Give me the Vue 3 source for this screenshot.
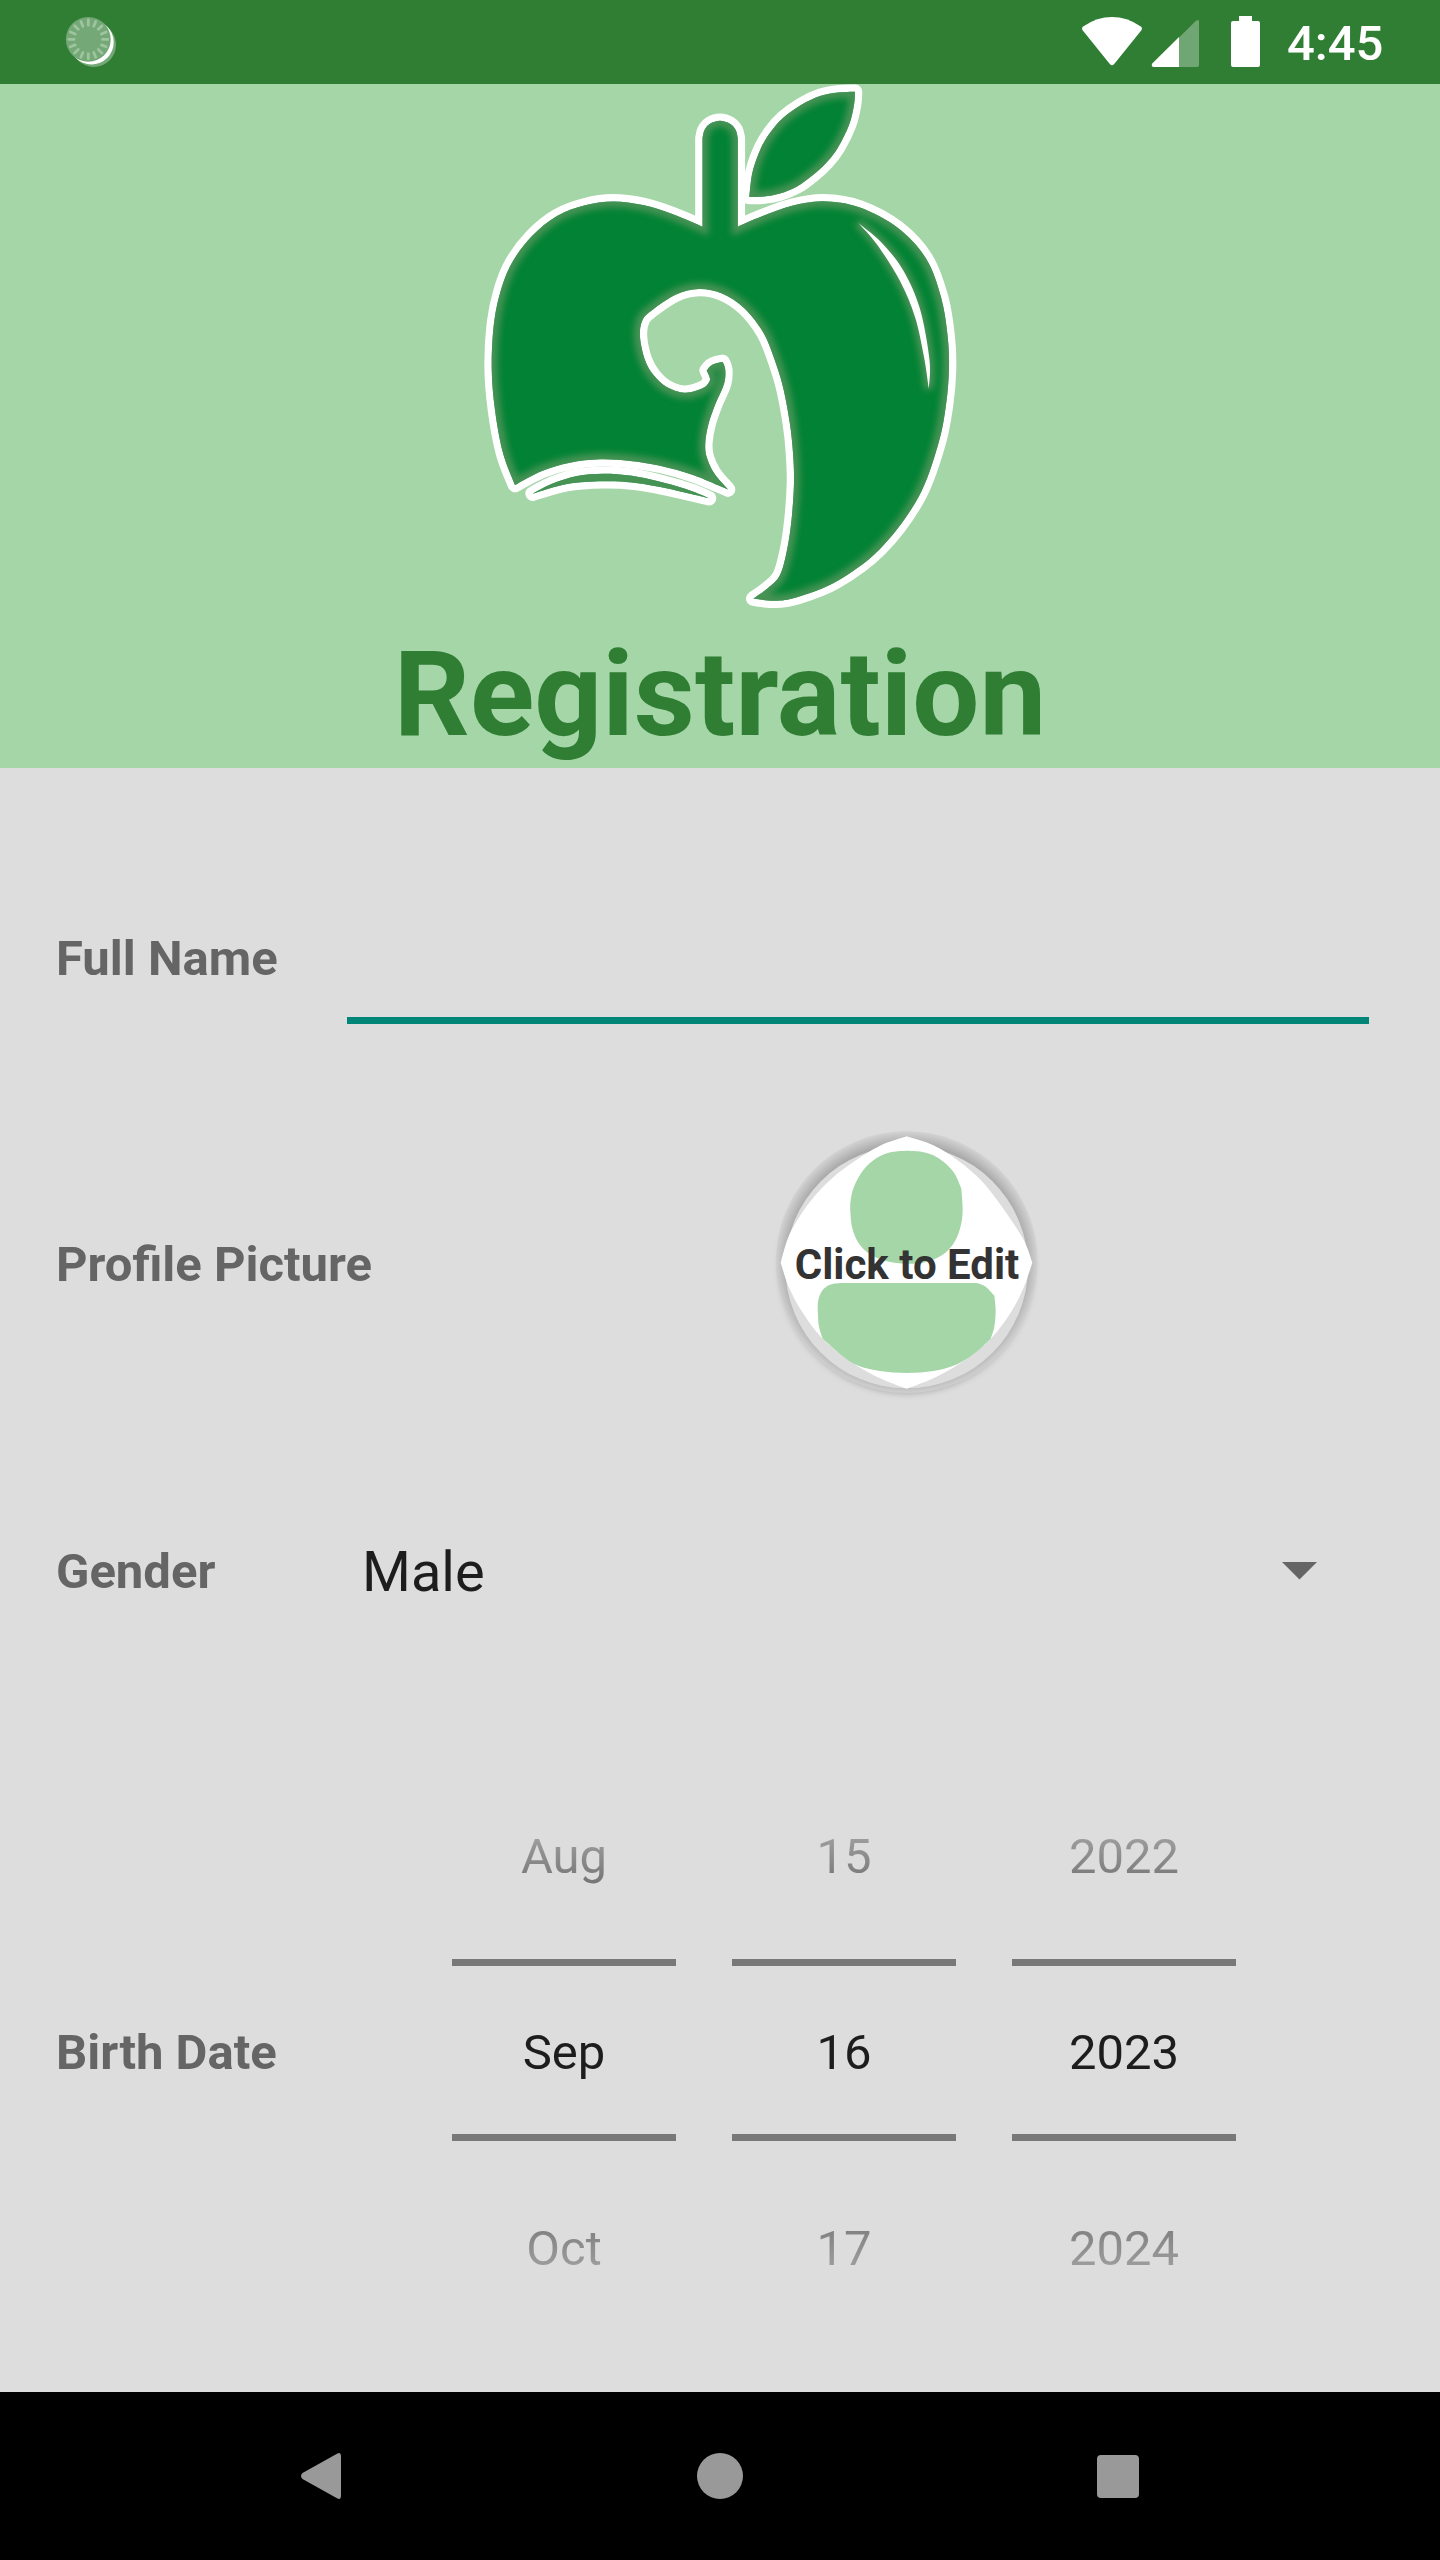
<script setup>
// Turns a run of points into a smooth cubic curve (Catmull-Rom).
function curve(pts) {
  let d = ''
  for (let i = 0; i < pts.length - 1; i++) {
    const p0 = pts[i - 1] || pts[i]
    const p1 = pts[i]
    const p2 = pts[i + 1]
    const p3 = pts[i + 2] || p2
    const c = [
      p1[0] + (p2[0] - p0[0]) / 6, p1[1] + (p2[1] - p0[1]) / 6,
      p2[0] - (p3[0] - p1[0]) / 6, p2[1] - (p3[1] - p1[1]) / 6,
      p2[0], p2[1],
    ]
    d += 'C' + c.map((n) => n.toFixed(2)).join(' ')
  }
  return d
}

// Each run starts where the previous one ended, with a sharp corner between them.
function shape(...runs) {
  return 'M' + runs[0][0].join(' ') + runs.map(curve).join('') + 'Z'
}

const apple = shape(
  [[702.5, 226.7], [702.5, 138]],
  [[702.5, 138], [704.5, 130], [710, 123.7], [720, 120.8], [730, 123.7], [735.7, 130], [737.8, 138]],
  [[737.8, 138], [737.8, 226.7]],
  [[737.8, 226.7], [762, 216.3], [792, 205.8], [823.3, 201.3], [860, 207.5], [898, 228], [926, 258.5], [941, 297], [947.5, 335], [949, 368], [946, 405], [938, 445], [918, 498], [880, 549], [836, 581.8], [797, 597.3], [775, 600.8], [753.3, 598.6]],
  [[753.3, 598.6], [768, 588], [780, 575], [787, 550], [791.5, 520], [794, 483], [793, 453], [789.8, 423], [783, 387], [774, 358], [763, 332], [744, 308], [722, 293.5], [699, 289], [676, 294.5], [653, 309.5], [642.5, 320], [640, 337], [645, 360], [653.5, 375], [666.7, 387], [685, 392.7], [703, 388], [709.3, 381.7], [709.7, 377.5], [706.7, 370.5]],
  [[706.7, 370.5], [710.5, 366], [715.5, 363.5], [722.7, 362]],
  [[722.7, 362], [725.3, 370], [724, 384], [715, 405], [708.5, 424], [705.3, 443], [706.7, 457], [714, 473], [728, 489.5]],
  [[728, 489.5], [693, 475], [660, 465.7], [630, 460.9], [600, 459.3], [570, 462.7], [542, 471], [515, 485]],
  [[515, 485], [503, 453], [495, 410], [491.7, 368], [494, 323], [501.5, 288], [513, 261], [532, 236], [557, 216], [585, 205.3], [613, 201.4], [643, 205], [673, 214.3], [702.5, 226.7]],
)
const leaf = shape(
  [[855, 91.7], [838, 92.5], [820, 96], [801, 105], [783, 118], [771, 131.5], [761, 148], [752.5, 172], [749.3, 197]],
  [[749.3, 197], [764, 196.6], [780, 193.5], [797, 186.5], [813, 175], [827, 162], [838, 147.5], [849, 125], [854, 105], [855, 91.7]],
)
const page = shape(
  [[532.7, 493.7], [552, 483.8], [577, 476], [603, 473.7], [632, 475.8], [665, 483], [690, 490.5], [709, 498.2]],
  [[709, 498.2], [665, 488], [632, 482.5], [603, 481.2], [567, 484], [532.7, 493.7]],
)
const shine = shape(
  [[858, 222.7], [881, 242], [903, 270], [920, 309], [929.5, 360], [928.8, 389]],
  [[928.8, 389], [924, 357], [915, 317], [900, 281], [877, 244.5], [858, 222.7]],
)

const badge = shape(
  [[500, 109], [580, 136], [655, 182], [725, 243], [790, 326], [850, 418], [877, 488]],
  [[877, 488], [852, 560], [815, 633], [757, 711], [680, 777], [590, 830], [500, 866]],
  [[500, 866], [410, 830], [320, 777], [243, 711], [185, 633], [146, 560], [122, 488]],
  [[122, 488], [150, 400], [210, 305], [275, 236], [340, 186], [420, 137], [500, 109]],
)
const head = shape(
  [[500, 152], [455, 156], [410, 174], [370, 210], [342, 260], [332, 300], [331, 335], [337, 385], [356, 430], [390, 463], [440, 484], [500, 491], [562, 485], [610, 463], [644, 425], [662, 378], [668, 330], [664, 266]],
  [[664, 266], [643, 220], [612, 187], [580, 166], [545, 155], [500, 152]],
)
const torso = shape(
  [[300, 549], [710, 549]],
  [[710, 549], [737, 560], [763, 587]],
  [[763, 587], [767, 630], [763, 680], [752, 716]],
  [[752, 716], [716, 750], [680, 777], [640, 797], [580, 813], [500, 819], [420, 813], [355, 797], [310, 770], [248, 716]],
  [[248, 716], [237, 680], [234, 645], [234, 605], [246, 573], [268, 555], [300, 549]],
)

const ticks = Array.from({ length: 16 }, (_, i) => i * 22.5)
const columns = [
  ['Aug', 'Sep', 'Oct'],
  ['15', '16', '17'],
  ['2022', '2023', '2024'],
]
</script>

<template>
  <div class="screen">
    <div class="status">
      <svg class="sync" width="56" height="56" viewBox="64 14 56 56">
        <circle cx="93.8" cy="44.8" r="22.2" fill="#75a877" />
        <circle cx="91.5" cy="42.3" r="22.2" fill="#fff" />
        <circle cx="88.3" cy="39.4" r="22.4" fill="#75a877" />
        <path
          v-for="a in ticks" :key="a" d="M88.3 20V25.2" :transform="`rotate(${a} 88.3 39.4)`"
          stroke="#9fc4a0" stroke-width="2.8" stroke-linecap="round"
        />
      </svg>
      <div class="status-right">
        <svg width="180" height="56" viewBox="1082 14 180 56" fill="#fff">
          <path d="M1082.8 30.5Q1081 28 1083.6 26.2Q1097 17 1112 17T1140.4 26.2Q1143 28 1141.2 30.5L1114 64.2Q1112 66.4 1110 64.2Z" />
          <path d="M1196 20.8Q1199 18.5 1199 22V65Q1199 67 1197 67H1179V37.5Z" fill="#70a673" />
          <path d="M1179 37V67H1154Q1151 67 1152 63.8Z" />
          <path d="M1239 16H1252V21H1258Q1260 21 1260 23V65Q1260 67 1258 67H1233Q1231 67 1231 65V23Q1231 21 1233 21H1239Z" />
        </svg>
        <span class="clock">4:45</span>
      </div>
    </div>

    <div class="header">
      <svg class="logo" width="480" height="541" viewBox="480 84 480 541">
        <defs>
          <filter id="soft" x="-10%" y="-10%" width="120%" height="120%"><feGaussianBlur stdDeviation="3.4" /></filter>
          <clipPath id="inside"><path :d="apple" /><path :d="leaf" /><path :d="page" /></clipPath>
        </defs>
        <g fill="#fff" stroke="#fff" stroke-width="14.6" stroke-linejoin="round">
          <path :d="page" /><path :d="leaf" /><path :d="apple" />
        </g>
        <g fill="#028234"><path :d="apple" /><path :d="leaf" /><path :d="page" /></g>
        <g clip-path="url(#inside)">
          <g fill="none" stroke="#5d985f" stroke-opacity=".75" stroke-width="12" filter="url(#soft)">
            <path :d="apple" /><path :d="leaf" /><path :d="page" /><path :d="shine" stroke-width="9" />
          </g>
        </g>
        <path :d="shine" fill="#fff" />
      </svg>
      <h1>Registration</h1>
    </div>

    <div class="form">
      <div class="row">
        <label>Full Name</label>
        <div class="input"></div>
      </div>
      <div class="row photo">
        <label>Profile Picture</label>
        <div class="avatar">
          <svg width="330" height="320" viewBox="0 0 990 960">
            <defs>
              <radialGradient id="rim" gradientUnits="userSpaceOnUse" cx="500" cy="488" r="394">
                <stop offset=".9" stop-color="#a9a9a9" />
                <stop offset="1" stop-color="#d3d3d3" />
              </radialGradient>
              <filter id="drop" x="-20%" y="-20%" width="140%" height="140%"><feGaussianBlur stdDeviation="10" /></filter>
            </defs>
            <circle cx="500" cy="500" r="381" fill="#000" fill-opacity=".22" filter="url(#drop)" />
            <circle cx="500" cy="486" r="393" fill="url(#rim)" />
            <circle cx="500" cy="501" r="364" fill="#ddd" />
            <path :d="badge" fill="#fff" />
            <path :d="head" fill="#a5d6a7" />
            <path :d="torso" fill="#a5d6a7" />
          </svg>
          <span>Click to Edit</span>
        </div>
      </div>
      <div class="row">
        <label>Gender</label>
        <div class="select">
          <span>Male</span>
          <svg width="35" height="18" viewBox="0 0 35 18"><path d="M0 0H35L17.5 17.5Z" fill="#656565" /></svg>
        </div>
      </div>
      <div class="row date">
        <label>Birth Date</label>
        <div class="picker">
          <div v-for="c in columns" :key="c[1]" class="col">
            <div class="item before">{{ c[0] }}</div>
            <div class="item current">{{ c[1] }}</div>
            <div class="item after">{{ c[2] }}</div>
          </div>
        </div>
      </div>
    </div>

    <div class="nav">
      <svg width="40" height="46" viewBox="0 0 40 46"><path d="M36 .8Q40-1.5 40 4V42Q40 47.500 36 45.200L1.500 26Q-1.500 23 1.500 20Z" fill="#999" /></svg>
      <svg class="home" width="46" height="46" viewBox="0 0 46 46"><circle cx="23" cy="23" r="23" fill="#999" /></svg>
      <svg width="42" height="43" viewBox="0 0 42 43"><rect width="42" height="43" rx="4" fill="#999" /></svg>
    </div>
  </div>
</template>

<style>
body { margin: 0; }
</style>

<style scoped>
.screen {
  width: 1440px;
  height: 2560px;
  display: flex;
  flex-direction: column;
  overflow: hidden;
  background: #ddd;
  font-family: Roboto, sans-serif;
}
.status {
  height: 84px;
  box-sizing: border-box;
  padding: 14px 56px 14px 64px;
  display: flex;
  justify-content: space-between;
  align-items: flex-start;
  background: #2f7e33;
}
.status svg { display: block; }
.status-right { display: flex; gap: 25px; }
.clock {
  width: 97px;
  font-size: 49px;
  font-weight: 500;
  line-height: 60px;
  color: #fff;
}
.header {
  height: 684px;
  display: flex;
  flex-direction: column;
  align-items: center;
  background: #a5d6a7;
}
.logo { display: block; flex: none; }
h1 {
  margin: 0;
  font-size: 119px;
  font-weight: 700;
  line-height: 140px;
  color: #2f7e33;
}
.form {
  height: 1624px;
  box-sizing: border-box;
  padding: 37px 56px 0;
}
.row {
  height: 306.500px;
  display: flex;
  align-items: center;
}
.row.date { height: 655px; }
label {
  flex: none;
  padding-top: 2px;
  font-size: 49px;
  font-weight: 700;
  line-height: 58px;
  color: #656565;
}
.photo label { padding-top: 0; }
.input {
  width: 1022px;
  height: 125px;
  margin-left: auto;
  margin-right: 15px;
  border-bottom: 7px solid #008577;
}
.avatar {
  width: 330px;
  height: 320px;
  margin-top: -10px;
  margin-left: auto;
  margin-right: 314px;
  display: grid;
  align-items: center;
}
.avatar > * { grid-area: 1 / 1; }
.avatar span {
  width: 334px;
  padding-top: 10px;
  text-align: center;
  font-size: 42px;
  font-weight: 700;
  line-height: 50px;
  color: #333;
}
.select {
  width: 955px;
  margin-left: auto;
  margin-right: 67px;
  display: flex;
  justify-content: space-between;
  align-items: center;
  font-size: 56px;
  line-height: 66px;
  color: #1d1d1d;
}
.select span { padding-top: 2px; }
.picker {
  display: flex;
  gap: 56px;
  margin-left: auto;
  margin-right: 148px;
}
.col { width: 224px; padding-top: 1px; }
.item {
  height: 196px;
  line-height: 196px;
  text-align: center;
  font-size: 49px;
}
.current {
  height: 168px;
  line-height: 174px;
  margin: 4px 0 10px;
  border-top: 7px solid #787878;
  border-bottom: 7px solid #787878;
  color: #1d1d1d;
}
.before, .after { color: transparent; background-clip: text; -webkit-background-clip: text; }
.before { background-image: linear-gradient(#bbb 0, #9c9c9c 80px, #757575 125px); }
.after { background-image: linear-gradient(#7b7b7b 70px, #a0a0a0 120px, #bbb 100%); }
.nav {
  height: 168px;
  display: flex;
  justify-content: space-between;
  align-items: center;
  box-sizing: border-box;
  padding: 0 301px;
  background: #000;
}
.home { margin-left: 1px; }
</style>
